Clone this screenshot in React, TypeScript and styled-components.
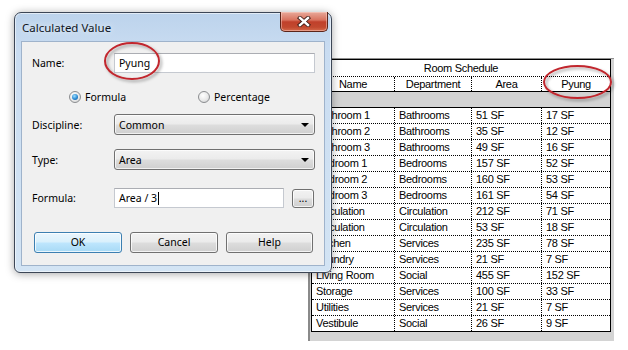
import React from "react";
import styled, { createGlobalStyle } from "styled-components";

const Global = createGlobalStyle`
  html, body { margin: 0; padding: 0; background: #fff; }
  body { width: 628px; height: 350px; overflow: hidden; }
  #root { width: 628px; height: 350px; }
  * { box-sizing: border-box; }
`;

const Desktop = styled.div`
  position: relative;
  width: 628px;
  height: 350px;
  background: #fff;
  overflow: hidden;
`;

/* ---------- Schedule ---------- */

const SchedulePanel = styled.div`
  position: absolute;
  left: 308px;
  top: 58px;
  width: 306px;
  height: 283px;
  background: #d4d4d4;
  border-top: 1px solid #8f8f8f;
  border-left: 2px solid #8a8a8a;
  padding: 0 3px 0 1px;
  font-family: "Liberation Sans", Arial, sans-serif;
  font-size: 11px;
  letter-spacing: -0.3px;
  color: #000;
`;

const Table = styled.div`
  width: 300px;
  border: 1px solid #000;
  background: #fff;
  display: flex;
  flex-direction: column;
`;

const TitleRow = styled.div`
  height: 17px;
  border-bottom: 1px dotted #000;
  display: flex;
  align-items: center;
  justify-content: center;
`;

const GridRow = styled.div<{ $h: number; $bottom: string }>`
  display: grid;
  grid-template-columns: 82px 77px 70px 69px;
  height: ${(p) => p.$h}px;
  border-bottom: ${(p) => p.$bottom};
`;

const Cell = styled.div<{ $first?: boolean; $center?: boolean }>`
  border-left: ${(p) => (p.$first ? "none" : "1px dotted #000")};
  display: flex;
  align-items: center;
  justify-content: ${(p) => (p.$center ? "center" : "flex-start")};
  padding-left: ${(p) => (p.$center ? 0 : 4)}px;
  white-space: nowrap;
  overflow: hidden;
  line-height: 1;
`;

const Band = styled.div`
  height: 16px;
  background: #d3d3d3;
  border-bottom: 1px solid #000;
`;

/* ---------- Dialog window ---------- */

const Window = styled.div`
  position: absolute;
  left: 14px;
  top: 12px;
  width: 318px;
  height: 261px;
  border: 1px solid #3c4656;
  border-radius: 7px 7px 6px 6px;
  background: linear-gradient(180deg, #bcd3ec 0%, #c9dcf1 14%, #cfe1f3 60%, #d3e4f4 100%);
  box-shadow: inset 0 0 0 1px rgba(255, 255, 255, 0.55), 0 1px 9px rgba(0, 0, 0, 0.35);
  padding: 0 6px 6px 6px;
  display: flex;
  flex-direction: column;
  font-family: "Noto Sans", "Open Sans", sans-serif;
  font-size: 10.5px;
  color: #000;
`;

const TitleBar = styled.div`
  height: 28px;
  display: flex;
  align-items: center;
  justify-content: space-between;
  padding-left: 1px;
`;

const TitleText = styled.span`
  font-size: 11.5px;
  color: #10161e;
  text-shadow: 0 0 6px rgba(255, 255, 255, 0.9);
`;

const CloseButton = styled.div`
  align-self: flex-start;
  margin-top: -1px;
  margin-right: -3px;
  width: 48px;
  height: 20px;
  border: 1px solid #5b2419;
  border-top: none;
  border-radius: 0 0 5px 5px;
  background: linear-gradient(180deg, #e8a99a 0%, #d9735f 42%, #c0402b 52%, #c2492f 80%, #d56a4c 100%);
  box-shadow: inset 0 0 0 1px rgba(255, 220, 210, 0.45);
  display: flex;
  align-items: center;
  justify-content: center;
`;

const Client = styled.div`
  flex: 1;
  background: #f0f0f0;
  border: 1px solid #9fb3cb;
  padding: 11px 9px 0 10px;
  display: flex;
  flex-direction: column;
`;

const FieldRow = styled.div<{ $mt: number }>`
  display: grid;
  grid-template-columns: 82px 1fr;
  align-items: center;
  margin-top: ${(p) => p.$mt}px;
`;

const Label = styled.span`
  white-space: nowrap;
`;

const TextInput = styled.div<{ $h: number }>`
  height: ${(p) => p.$h}px;
  background: #fff;
  border: 1px solid #c5c9d0;
  border-top-color: #abadb3;
  display: flex;
  align-items: center;
  padding-left: 4px;
`;

const Caret = styled.span`
  display: inline-block;
  width: 1px;
  height: 13px;
  background: #000;
  margin-left: 1px;
`;

const Select = styled.div`
  height: 21px;
  border: 1px solid #707070;
  border-radius: 3px;
  background: linear-gradient(180deg, #f3f3f3 0%, #ebebeb 48%, #dddddd 52%, #cfcfcf 100%);
  box-shadow: inset 0 0 0 1px rgba(255, 255, 255, 0.7);
  display: flex;
  align-items: center;
  justify-content: space-between;
  padding: 0 4px 0 4px;
`;

const Arrow = styled.span`
  width: 0;
  height: 0;
  border-left: 4px solid transparent;
  border-right: 4px solid transparent;
  border-top: 4px solid #000;
  margin-right: 1px;
`;

const RadioRow = styled.div`
  display: grid;
  grid-template-columns: 129px auto;
  margin-top: 17px;
  padding-left: 37px;
  height: 14px;
  align-items: center;
`;

const RadioItem = styled.div`
  display: flex;
  align-items: center;
  gap: 4px;
`;

const RadioCircle = styled.span<{ $on?: boolean }>`
  width: 12px;
  height: 12px;
  border-radius: 50%;
  border: 1px solid #8b8d90;
  background: radial-gradient(circle at 40% 35%, #ffffff 0%, #e9e9e9 55%, #c9cbcd 100%);
  display: flex;
  align-items: center;
  justify-content: center;

  &::after {
    content: "";
    display: ${(p) => (p.$on ? "block" : "none")};
    width: 6px;
    height: 6px;
    border-radius: 50%;
    background: radial-gradient(circle at 40% 35%, #9fe0ff 0%, #2a8ad4 55%, #0f4f8f 100%);
  }
`;

const FormulaGrid = styled.div`
  display: grid;
  grid-template-columns: 170px 22px;
  column-gap: 8px;
  align-items: center;
`;

const Button = styled.div<{ $default?: boolean; $h?: number }>`
  height: ${(p) => p.$h ?? 21}px;
  border: 1px solid ${(p) => (p.$default ? "#3c7fb1" : "#707070")};
  border-radius: 3px;
  background: ${(p) =>
    p.$default
      ? "linear-gradient(180deg, #eaf6fd 0%, #d9f0fc 48%, #bee6fd 52%, #a7d9f5 100%)"
      : "linear-gradient(180deg, #f2f2f2 0%, #ebebeb 48%, #dddddd 52%, #cfcfcf 100%)"};
  box-shadow: inset 0 0 0 1px rgba(255, 255, 255, 0.75);
  display: flex;
  align-items: center;
  justify-content: center;
  line-height: 1;
`;

const ButtonRow = styled.div`
  display: grid;
  grid-template-columns: 88px 88px 87px;
  column-gap: 8px;
  margin-top: 24px;
  padding-left: 2px;
`;

const Annotation = styled.svg<{ $x: number; $y: number }>`
  position: absolute;
  left: ${(p) => p.$x}px;
  top: ${(p) => p.$y}px;
  overflow: visible;
  pointer-events: none;
`;

const rows: [string, string, string, string][] = [
  ["Bathroom 1", "Bathrooms", "51 SF", "17 SF"],
  ["Bathroom 2", "Bathrooms", "35 SF", "12 SF"],
  ["Bathroom 3", "Bathrooms", "49 SF", "16 SF"],
  ["Bedroom 1", "Bedrooms", "157 SF", "52 SF"],
  ["Bedroom 2", "Bedrooms", "160 SF", "53 SF"],
  ["Bedroom 3", "Bedrooms", "161 SF", "54 SF"],
  ["Circulation", "Circulation", "212 SF", "71 SF"],
  ["Circulation", "Circulation", "53 SF", "18 SF"],
  ["Kitchen", "Services", "235 SF", "78 SF"],
  ["Laundry", "Services", "21 SF", "7 SF"],
  ["Living Room", "Social", "455 SF", "152 SF"],
  ["Storage", "Services", "100 SF", "33 SF"],
  ["Utilities", "Services", "21 SF", "7 SF"],
  ["Vestibule", "Social", "26 SF", "9 SF"],
];

const RedEllipse: React.FC<{ x: number; y: number; w: number; h: number; id: string }> = ({ x, y, w, h, id }) => (
  <Annotation $x={x} $y={y} width={w} height={h} viewBox={`0 0 ${w} ${h}`}>
    <defs>
      <filter id={id} x="-30%" y="-30%" width="160%" height="160%">
        <feDropShadow dx="2" dy="2" stdDeviation="1.6" floodColor="#000" floodOpacity="0.35" />
      </filter>
    </defs>
    <ellipse
      cx={w / 2}
      cy={h / 2}
      rx={w / 2 - 2}
      ry={h / 2 - 2}
      fill="none"
      stroke="#c1272d"
      strokeWidth="2"
      filter={`url(#${id})`}
    />
  </Annotation>
);

export default function App() {
  return (
    <Desktop>
      <Global />
      <SchedulePanel>
        <Table>
          <TitleRow>Room Schedule</TitleRow>
          <GridRow $h={15} $bottom="1px solid #000">
            <Cell $first $center>Name</Cell>
            <Cell $center>Department</Cell>
            <Cell $center>Area</Cell>
            <Cell $center>Pyung</Cell>
          </GridRow>
          <Band />
          {rows.map((r, i) => (
            <GridRow key={i} $h={i === rows.length - 1 ? 15 : 16} $bottom={i === rows.length - 1 ? "none" : "1px dotted #000"}>
              <Cell $first>{r[0]}</Cell>
              <Cell>{r[1]}</Cell>
              <Cell>{r[2]}</Cell>
              <Cell>{r[3]}</Cell>
            </GridRow>
          ))}
        </Table>
      </SchedulePanel>

      <Window>
        <TitleBar>
          <TitleText>Calculated Value</TitleText>
          <CloseButton>
            <svg width="14" height="11" viewBox="0 0 14 11">
              <path d="M3 2 L11 9 M11 2 L3 9" stroke="#3a1a14" strokeWidth="4.2" strokeLinecap="square" fill="none" />
              <path d="M3 2 L11 9 M11 2 L3 9" stroke="#ffffff" strokeWidth="2.4" strokeLinecap="square" fill="none" />
            </svg>
          </CloseButton>
        </TitleBar>
        <Client>
          <FieldRow $mt={0}>
            <Label>Name:</Label>
            <TextInput $h={20}>Pyung</TextInput>
          </FieldRow>
          <RadioRow>
            <RadioItem>
              <RadioCircle $on />
              <span>Formula</span>
            </RadioItem>
            <RadioItem>
              <RadioCircle />
              <span>Percentage</span>
            </RadioItem>
          </RadioRow>
          <FieldRow $mt={10}>
            <Label>Discipline:</Label>
            <Select>
              <span>Common</span>
              <Arrow />
            </Select>
          </FieldRow>
          <FieldRow $mt={14}>
            <Label>Type:</Label>
            <Select>
              <span>Area</span>
              <Arrow />
            </Select>
          </FieldRow>
          <FieldRow $mt={18}>
            <Label>Formula:</Label>
            <FormulaGrid>
              <TextInput $h={20}>
                Area / 3<Caret />
              </TextInput>
              <Button $h={19}>...</Button>
            </FormulaGrid>
          </FieldRow>
          <ButtonRow>
            <Button $default>OK</Button>
            <Button>Cancel</Button>
            <Button>Help</Button>
          </ButtonRow>
        </Client>
      </Window>

      <RedEllipse id="e1" x={103} y={41} w={58} h={40} />
      <RedEllipse id="e2" x={542} y={64} w={71} h={36} />
    </Desktop>
  );
}
